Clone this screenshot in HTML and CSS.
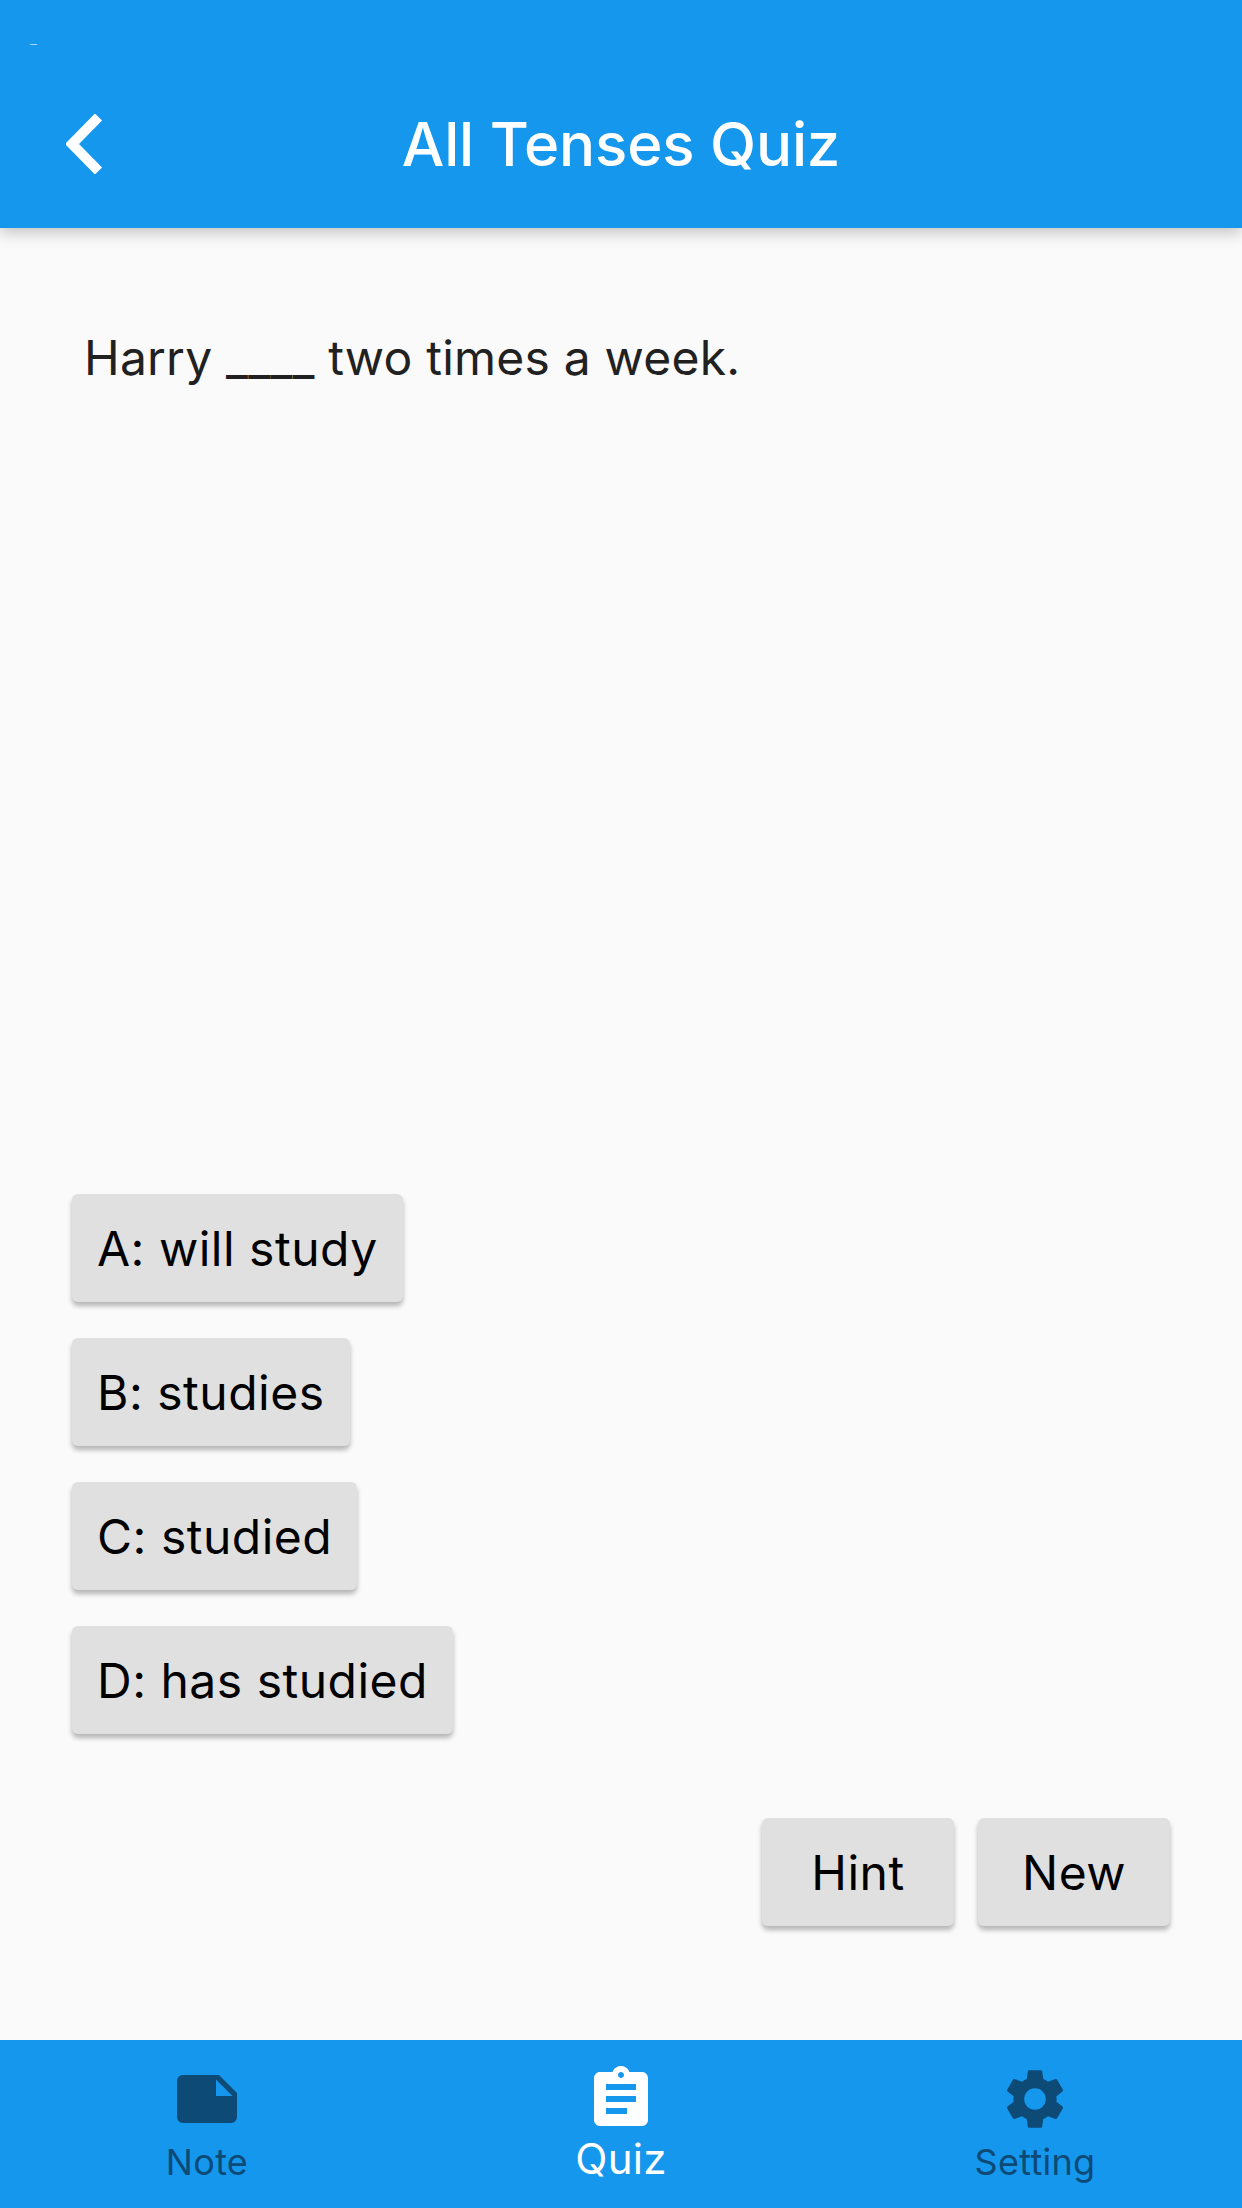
FILE: index.html
```html
<!DOCTYPE html>
<html lang="en">
<head>
<meta charset="UTF-8">
<title>All Tenses Quiz</title>
<meta name="viewport" content="width=device-width, initial-scale=1.0">
<link rel="stylesheet" href="styles.css">
</head>

<body>
<div class="app">

<header class="topbar">
<span class="speck"></span>
<svg class="back" viewBox="0 0 37 60"><path d="M32.5 3 6 30l26.500 27" fill="none" stroke="#fff" stroke-width="10"/></svg>
<h1>All Tenses Quiz</h1>
</header>

<main class="content">
<p class="question">Harry ____ two times a week.</p>

<div class="answers">
<button>A: will study</button>
<button>B: studies</button>
<button>C: studied</button>
<button>D: has studied</button>
</div>

<div class="actions">
<button>Hint</button>
<button>New</button>
</div>
</main>

<nav class="tabs">
<div class="tab">
<svg viewBox="0 0 24 24"><path d="M22 10l-6-6H4c-1.100 0-2 .9-2 2v12.010c0 1.100.9 1.990 2 1.990l16-.01c1.100 0 2-.89 2-1.990v-8zm-7-4.500l5.500 5.500H15V5.500z"/></svg>
<span>Note</span>
</div>
<div class="tab active">
<svg viewBox="0 0 24 24"><path d="M19 3h-4.180C14.400 1.840 13.300 1 12 1c-1.300 0-2.400.84-2.820 2H5c-1.100 0-2 .9-2 2v14c0 1.100.9 2 2 2h14c1.100 0 2-.9 2-2V5c0-1.100-.9-2-2-2zm-7 0c.55 0 1 .45 1 1s-.45 1-1 1-1-.45-1-1 .45-1 1-1zm2 14H7v-2h7v2zm3-4H7v-2h10v2zm0-4H7V7h10v2z"/></svg>
<span>Quiz</span>
</div>
<div class="tab">
<svg viewBox="0 0 24 24"><path d="M19.140 12.940c.04-.3.06-.61.06-.94 0-.32-.02-.64-.07-.94l2.030-1.580c.18-.14.23-.41.12-.61l-1.920-3.320c-.12-.22-.37-.29-.59-.22l-2.390.96c-.5-.38-1.030-.7-1.620-.94l-.36-2.540c-.04-.24-.24-.41-.48-.41h-3.840c-.24 0-.43.17-.47.41l-.36 2.540c-.59.24-1.130.57-1.620.94l-2.390-.96c-.22-.08-.47 0-.59.22L2.740 8.870c-.12.21-.08.47.12.61l2.030 1.580c-.05.3-.09.63-.09.94s.02.64.07.94l-2.030 1.580c-.18.14-.23.41-.12.61l1.920 3.320c.12.22.37.29.59.22l2.390-.96c.5.38 1.030.7 1.620.94l.36 2.540c.05.24.24.41.48.41h3.840c.24 0 .44-.17.47-.41l.36-2.540c.59-.24 1.130-.56 1.620-.94l2.390.96c.22.08.47 0 .59-.22l1.920-3.320c.12-.22.07-.47-.12-.61l-2.010-1.580zM12 15.600c-1.980 0-3.600-1.620-3.600-3.600s1.620-3.600 3.600-3.600 3.600 1.620 3.600 3.600-1.620 3.600-3.600 3.600z"/></svg>
<span>Setting</span>
</div>
</nav>

</div>
</body>
</html>
```

FILE: styles.css
```css
*{box-sizing:border-box}
body{margin:0;font-family:Inter,"Liberation Sans",sans-serif;background:#fafafa;color:#212121}
.app{height:2208px;display:flex;flex-direction:column}

.topbar{position:relative;z-index:2;height:228px;flex:none;padding:60px 0 0 66px;display:flex;align-items:center;background:#1597ee;box-shadow:0 5px 14px #00000038}
.speck{position:absolute;left:30px;top:44px;width:7px;height:1px;background:#a5d8f8}
.back{width:37px;height:60px;flex:none}
.topbar h1{margin:0 auto;padding-right:103px;font-size:60px;font-weight:500;letter-spacing:-.2px;color:white}

.content{flex:1;display:flex;flex-direction:column;padding:0 72px}
.question{margin:94px 0 0 12px;font-size:48px;line-height:72px;letter-spacing:.22px}
.answers{margin-top:auto;display:flex;flex-direction:column;align-items:flex-start;gap:36px}
.actions{margin:84px 0 114px;display:flex;justify-content:flex-end;gap:24px}

button{height:108px;padding:0 25px;border:0;border-radius:6px;background:#e0e0e0;color:#000;font-family:inherit;font-size:48px;letter-spacing:.5px;box-shadow:0 4px 5px #00000047}
.actions button{width:192px;padding:0}

.tabs{height:168px;flex:none;display:grid;grid-template-columns:repeat(3,1fr);background:#1597ee;color:#0d4a75}
.tab{display:flex;flex-direction:column;align-items:center;padding-top:23px;font-size:36px;line-height:44px;letter-spacing:.3px}
.tab span{margin-top:5px}
.tab svg{width:72px;height:72px;fill:currentColor}
.tab.active{color:white;font-size:42px}
.tab.active span{margin-top:2px}
```
